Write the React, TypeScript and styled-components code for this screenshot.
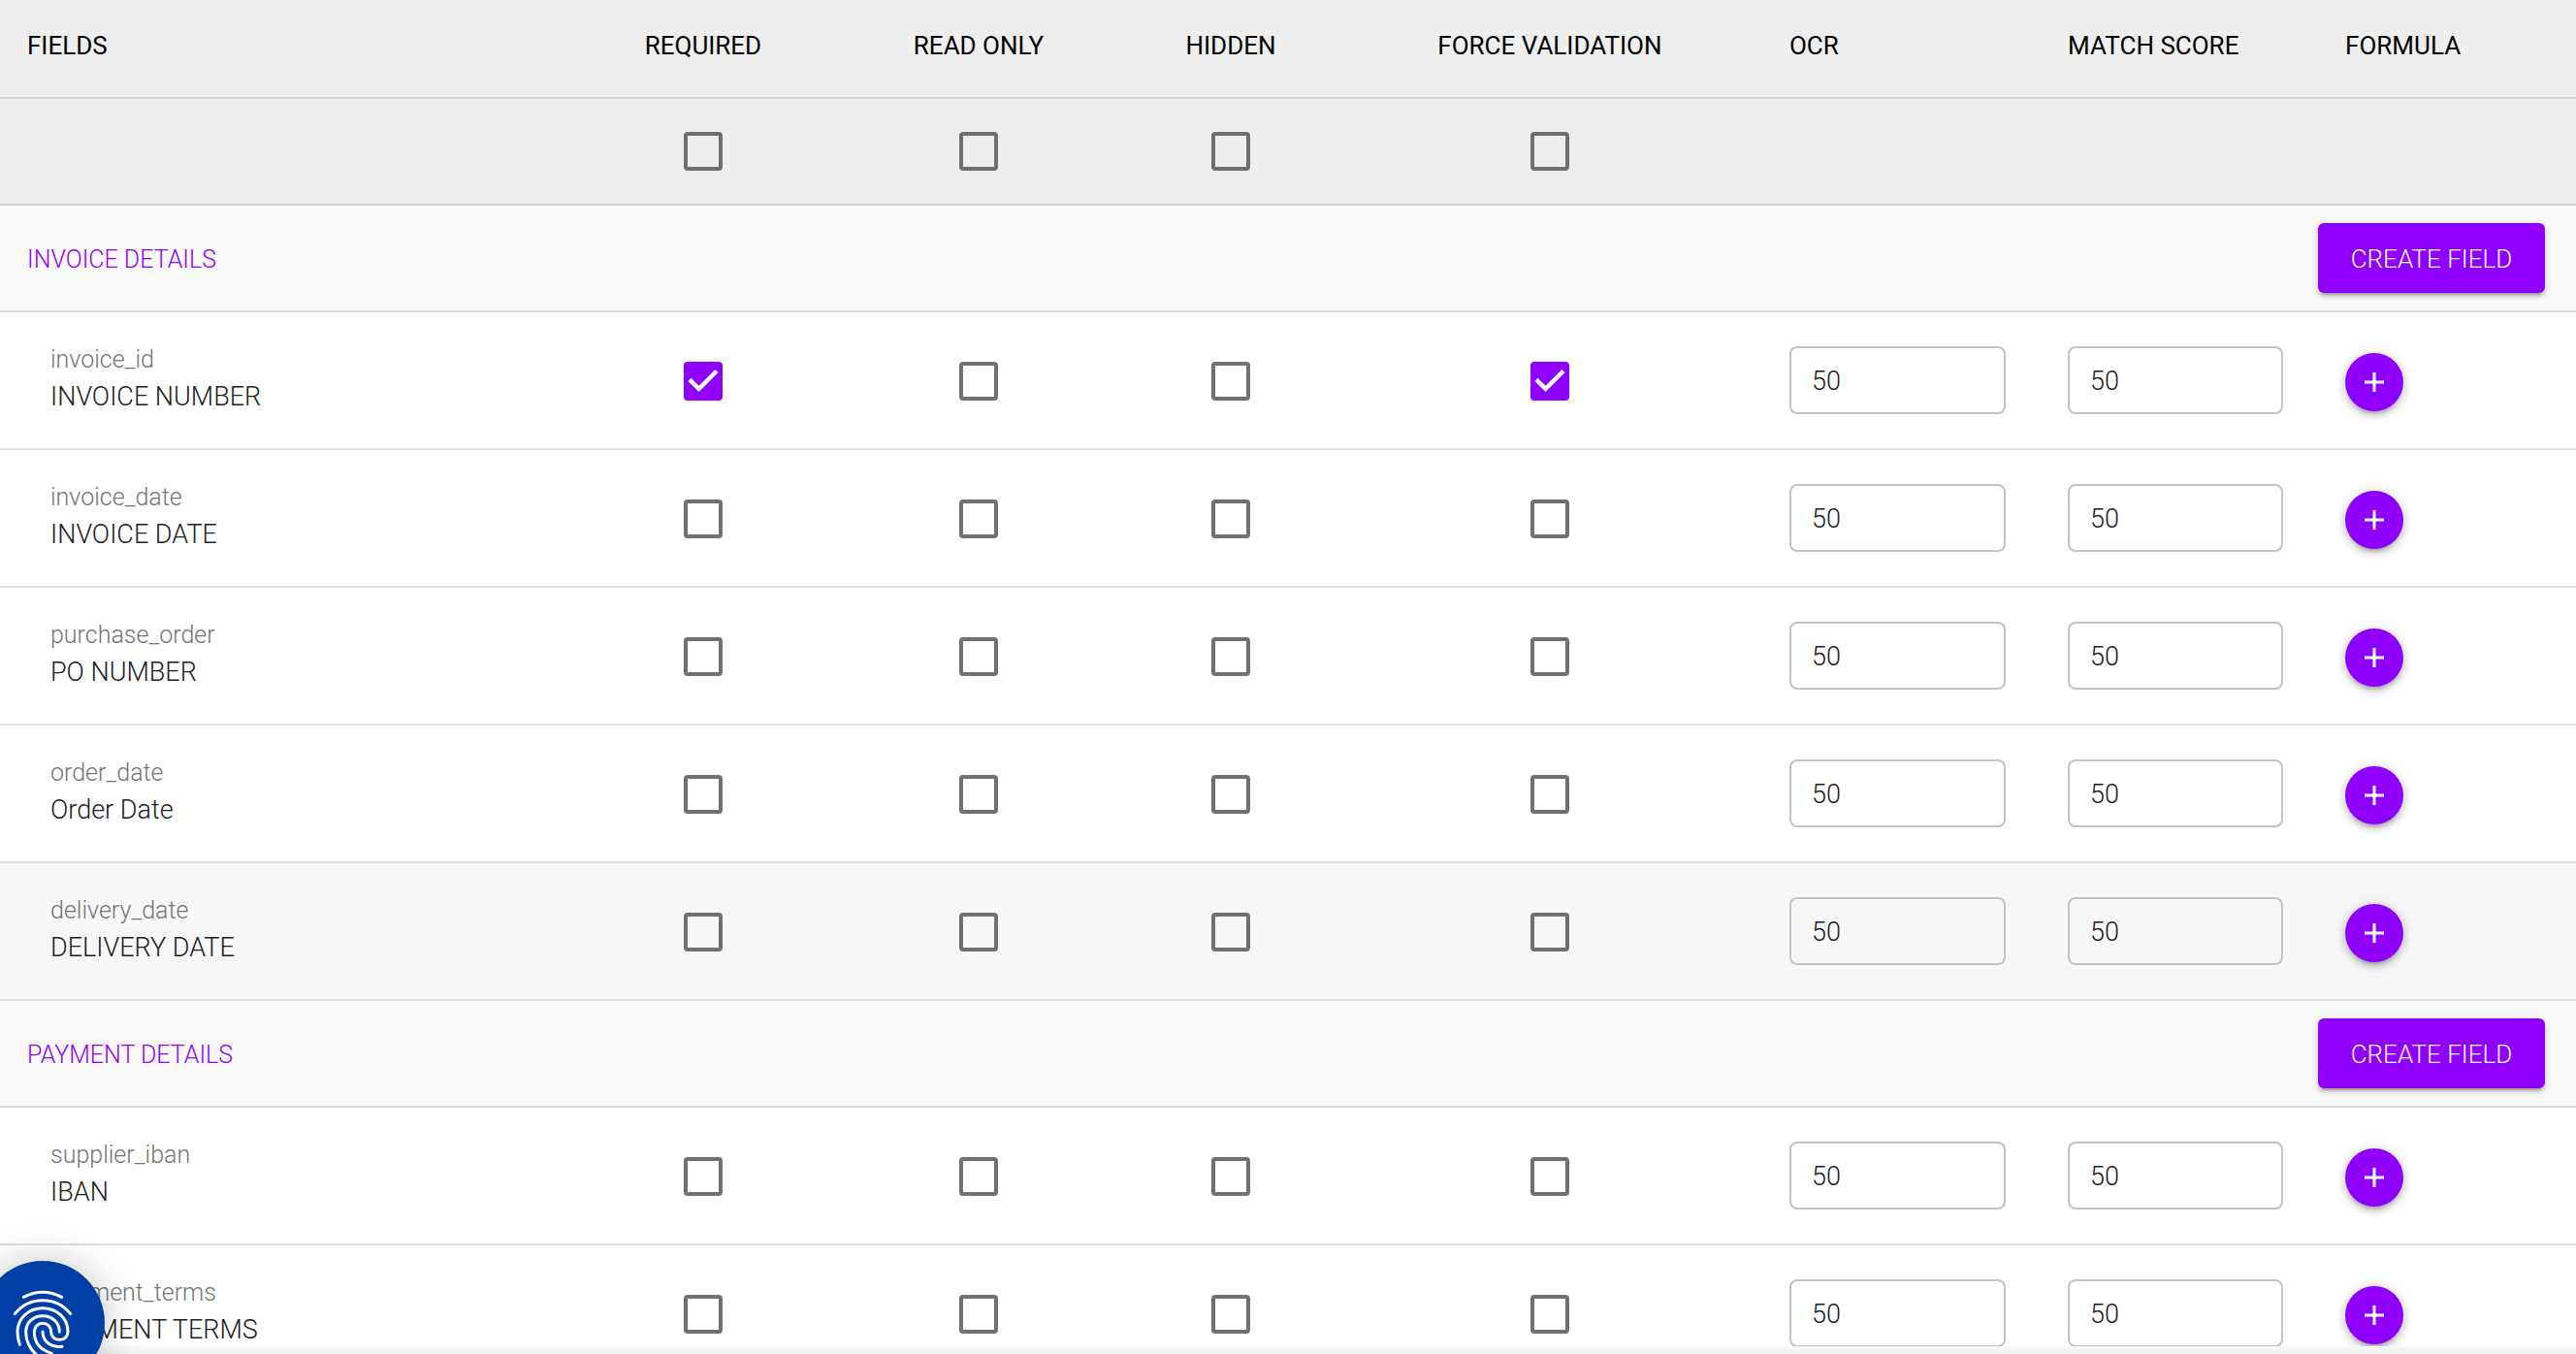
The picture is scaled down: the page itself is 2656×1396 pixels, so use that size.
import React, { useState } from "react";
import styled, { createGlobalStyle } from "styled-components";

const color = {
  accent: "#8f00ff",
  text: "#212121",
  muted: "#757575",
  line: "#e0e0e0",
  headLine: "#d0d0d0",
  headBg: "#eeeeee",
  sectionBg: "#f9f9f9",
  activeBg: "#f7f7f7",
  widget: "#003fa5",
};

const GlobalStyle = createGlobalStyle`
  *, *::before, *::after { box-sizing: border-box; }
  html { scrollbar-width: none; }
  body {
    margin: 0;
    background: #fff;
    color: ${color.text};
    font-family: Roboto, "Open Sans", sans-serif;
    font-size: 26px;
    font-weight: 300;
  }
  button, input { font: inherit; }
`;

const FieldsTable = styled.table`
  width: 100%;
  border-collapse: separate;
  border-spacing: 0;
  table-layout: fixed;
`;

const Col = styled.col<{ $share: number }>`
  width: ${(p) => p.$share}%;
`;

const HeadCell = styled.th<{ $center?: boolean }>`
  height: 102px;
  padding: 0 28px 6px;
  background: ${color.headBg};
  border-bottom: 2px solid ${color.headLine};
  color: #000;
  font-weight: 400;
  text-align: ${(p) => (p.$center ? "center" : "left")};
  white-space: nowrap;
`;

const BulkCell = styled.td`
  height: 110px;
  padding: 0;
  background: ${color.headBg};
  border-bottom: 2px solid ${color.headLine};
`;

const SectionTitle = styled.th`
  height: 110px;
  padding: 2px 28px 0;
  background: ${color.sectionBg};
  border-bottom: 2px solid #dadada;
  color: ${color.accent};
  font-size: 25px;
  font-weight: 300;
  text-align: left;
`;

const SectionAction = styled.td`
  padding: 0 32px 0 0;
  background: ${color.sectionBg};
  border-bottom: 2px solid #dadada;
  text-align: right;
`;

const CreateButton = styled.button`
  min-width: 234px;
  height: 72px;
  padding: 2px 32px 0;
  border: 0;
  border-radius: 6px;
  background: ${color.accent};
  color: #fff;
  white-space: nowrap;
  vertical-align: middle;
  box-shadow: 0 6px 2px -4px rgba(0, 0, 0, 0.2), 0 4px 4px rgba(0, 0, 0, 0.14),
    0 2px 10px rgba(0, 0, 0, 0.12);
  cursor: pointer;
`;

const FieldRow = styled.tr<{ $active?: boolean }>`
  background: ${(p) => (p.$active ? color.activeBg : "#fff")};
`;

const NameCell = styled.th`
  height: 142px;
  padding: 0 28px 4px 52px;
  border-bottom: 2px solid ${color.line};
  font-weight: 300;
  text-align: left;
`;

const FieldId = styled.div`
  color: ${color.muted};
  font-size: 25px;
  line-height: 38px;
`;

const FieldLabel = styled.div`
  font-size: 27px;
  line-height: 38px;
`;

const Cell = styled.td`
  padding: 0 28px;
  border-bottom: 2px solid ${color.line};
`;

const ToggleCell = styled(Cell)`
  padding-top: 2px;
`;

const CheckWrap = styled.label`
  display: grid;
  width: 40px;
  height: 40px;
  margin: 0 auto;
  cursor: pointer;
`;

const CheckInput = styled.input`
  grid-area: 1 / 1;
  width: 40px;
  height: 40px;
  margin: 0;
  appearance: none;
  border: 4px solid #707070;
  border-radius: 4px;
  cursor: pointer;

  &:checked {
    border-color: ${color.accent};
    background: ${color.accent};
  }
`;

const CheckMark = styled.svg`
  grid-area: 1 / 1;
  width: 40px;
  height: 40px;
  fill: #fff;
  pointer-events: none;
`;

const ScoreInput = styled.input`
  display: block;
  width: calc(100% - 8px);
  height: 70px;
  padding: 2px 21px 0;
  border: 2px solid #c2c2c2;
  border-radius: 8px;
  background: transparent;
  color: ${color.text};
  font-size: 27px;
`;

const AddButton = styled.button`
  display: grid;
  place-items: center;
  width: 60px;
  height: 60px;
  margin-top: 4px;
  padding: 0;
  border: 0;
  border-radius: 50%;
  background: ${color.accent};
  box-shadow: 0 6px 4px -4px rgba(0, 0, 0, 0.2), 0 4px 8px rgba(0, 0, 0, 0.2),
    0 0 14px rgba(0, 0, 0, 0.12);
  cursor: pointer;
`;

const BottomShade = styled.div`
  position: fixed;
  right: 0;
  bottom: 0;
  left: 0;
  height: 8px;
  background: linear-gradient(#fafafa, #efefef);
`;

const PrivacyButton = styled.button`
  position: fixed;
  bottom: -32px;
  left: -20px;
  display: grid;
  place-items: center;
  width: 128px;
  height: 128px;
  padding: 0;
  border: 0;
  border-radius: 50%;
  background: ${color.widget};
  box-shadow: 0 0 40px rgba(0, 0, 0, 0.24);
  cursor: pointer;
`;

function Check({ label, initial = false }: { label: string; initial?: boolean }) {
  const [on, setOn] = useState(initial);
  return (
    <CheckWrap>
      <CheckInput type="checkbox" aria-label={label} checked={on} onChange={() => setOn(!on)} />
      {on && (
        <CheckMark viewBox="3 3 18 18" aria-hidden="true">
          <path d="M10 17l-5-5 1.41-1.41L10 14.17l7.59-7.59L19 8z" />
        </CheckMark>
      )}
    </CheckWrap>
  );
}

function Fingerprint() {
  return (
    <svg
      width="64"
      height="80"
      viewBox="36 102 192 240"
      fill="none"
      stroke="#fff"
      strokeWidth="9"
      strokeLinecap="round"
      aria-hidden="true"
    >
      <path d="M73 142Q132 112 191 142" />
      <path d="M46 194C66 168 96 152 132 152S198 168 218 194" />
      <path d="M61 289C55 272 54 262 54 250C54 208 88 176 132 176S210 208 210 249C210 264 199 274 184 274S158 264 158 249C158 234 147 223 132 223S106 234 106 250C106 284 126 306 160 316" />
      <path d="M184 249C184 221 162 200 132 200S80 221 80 250C80 281 92 302 114 322" />
      <path d="M132 249C132 279 156 298 192 295" />
    </svg>
  );
}

const toggles = ["Required", "Read only", "Hidden", "Force validation"];

const columns = [
  { title: "FIELDS", share: 22.25 },
  { title: "REQUIRED", share: 10.09, center: true },
  { title: "READ ONLY", share: 11.3, center: true },
  { title: "HIDDEN", share: 8.28, center: true },
  { title: "FORCE VALIDATION", share: 16.49, center: true },
  { title: "OCR", share: 10.81 },
  { title: "MATCH SCORE", share: 10.77 },
  { title: "FORMULA", share: 10.01 },
];

type Field = { id: string; label: string; checked?: string[]; active?: boolean };

const sections: { title: string; fields: Field[] }[] = [
  {
    title: "INVOICE DETAILS",
    fields: [
      { id: "invoice_id", label: "INVOICE NUMBER", checked: ["Required", "Force validation"] },
      { id: "invoice_date", label: "INVOICE DATE" },
      { id: "purchase_order", label: "PO NUMBER" },
      { id: "order_date", label: "Order Date" },
      { id: "delivery_date", label: "DELIVERY DATE", active: true },
    ],
  },
  {
    title: "PAYMENT DETAILS",
    fields: [
      { id: "supplier_iban", label: "IBAN" },
      { id: "payment_terms", label: "PAYMENT TERMS" },
    ],
  },
];

function FieldLine({ field }: { field: Field }) {
  return (
    <FieldRow $active={field.active}>
      <NameCell scope="row">
        <FieldId>{field.id}</FieldId>
        <FieldLabel>{field.label}</FieldLabel>
      </NameCell>
      {toggles.map((name) => (
        <ToggleCell key={name}>
          <Check label={`${name}: ${field.label}`} initial={field.checked?.includes(name)} />
        </ToggleCell>
      ))}
      <Cell>
        <ScoreInput aria-label={`OCR: ${field.label}`} defaultValue="50" />
      </Cell>
      <Cell>
        <ScoreInput aria-label={`Match score: ${field.label}`} defaultValue="50" />
      </Cell>
      <Cell>
        <AddButton type="button" aria-label={`Add formula: ${field.label}`}>
          <svg width="22" height="22" viewBox="0 0 22 22" stroke="#fff" strokeWidth="3" aria-hidden="true">
            <path d="M11 1v20M1 11h20" />
          </svg>
        </AddButton>
      </Cell>
    </FieldRow>
  );
}

export default function App() {
  return (
    <>
      <GlobalStyle />
      <FieldsTable>
        <colgroup>
          {columns.map((c) => (
            <Col key={c.title} $share={c.share} />
          ))}
        </colgroup>
        <thead>
          <tr>
            {columns.map((c) => (
              <HeadCell key={c.title} scope="col" $center={c.center}>
                {c.title}
              </HeadCell>
            ))}
          </tr>
          <tr>
            <BulkCell />
            {toggles.map((name) => (
              <BulkCell key={name}>
                <Check label={`${name}: all fields`} />
              </BulkCell>
            ))}
            <BulkCell colSpan={3} />
          </tr>
        </thead>
        {sections.map((section) => (
          <tbody key={section.title}>
            <tr>
              <SectionTitle colSpan={6} scope="rowgroup">
                {section.title}
              </SectionTitle>
              <SectionAction colSpan={2}>
                <CreateButton type="button">CREATE FIELD</CreateButton>
              </SectionAction>
            </tr>
            {section.fields.map((field) => (
              <FieldLine key={field.id} field={field} />
            ))}
          </tbody>
        ))}
      </FieldsTable>
      <BottomShade />
      <PrivacyButton type="button" aria-label="Privacy settings">
        <Fingerprint />
      </PrivacyButton>
    </>
  );
}
